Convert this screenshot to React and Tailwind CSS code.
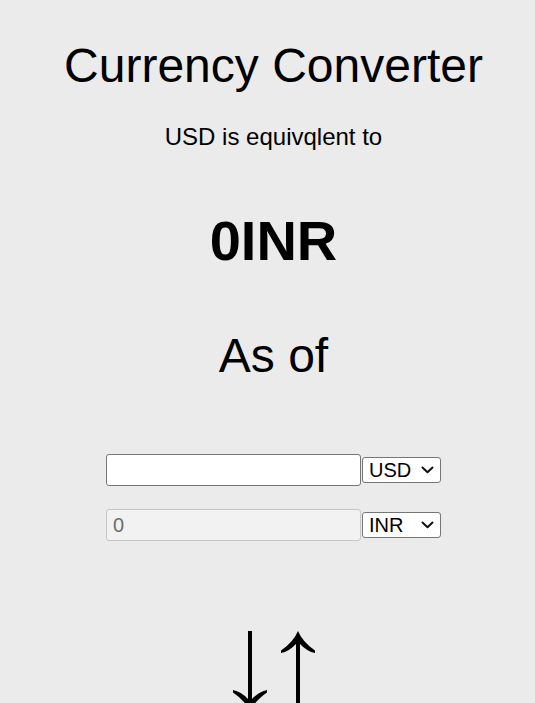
import React, { useState } from 'react';

const Chevron = () => (
  <svg
    className="pointer-events-none absolute right-[7px] top-1/2 -translate-y-1/2"
    width="13"
    height="8"
    viewBox="0 0 13 8"
    fill="none"
  >
    <path d="M1.5 1.5 L6.5 6.2 L11.5 1.5" stroke="#111" strokeWidth="2" strokeLinecap="round" strokeLinejoin="round" />
  </svg>
);

const CurrencySelect = ({ value, onChange, options }) => (
  <div className="relative">
    <select
      value={value}
      onChange={(e) => onChange(e.target.value)}
      className="block appearance-none w-[79px] h-[26px] pl-[6px] pr-5 text-[20px] leading-[22px] bg-white border border-[#767676] rounded-[3px]"
    >
      {options.map((o) => (
        <option key={o}>{o}</option>
      ))}
    </select>
    <Chevron />
  </div>
);

const SwapArrows = () => (
  <svg width="84" height="81" viewBox="0 0 84 81" className="block">
    {/* down arrow */}
    <path
      d="M18 81 Q22.5 70 35 61.5 L35 59 Q27 60.5 20 68 L20 0 L16 0 L16 68 Q9 60.5 1 59 L1 61.5 Q13.5 70 18 81 Z"
      fill="#000"
    />
    {/* up arrow */}
    <path
      d="M66 0 Q70.5 11 83 19.5 L83 22 Q75 20.5 68 13 L68 81 L64 81 L64 13 Q57 20.5 49 22 L49 19.5 Q61.5 11 66 0 Z"
      fill="#000"
    />
  </svg>
);

export default function App() {
  const [amount, setAmount] = useState('');
  const [from, setFrom] = useState('USD');
  const [to, setTo] = useState('INR');

  return (
    <div
      className="min-h-[703px] bg-[#ebebeb] pl-[12px] text-black text-center overflow-hidden"
      style={{ fontFamily: '"Liberation Sans", Arial, sans-serif' }}
    >
      <div className="flex flex-col items-center">
        <h1 className="mt-[38px] text-[48px] leading-[55px]">Currency Converter</h1>
        <p className="mt-[30px] text-[24px] leading-[28px]">{from} is equivqlent to</p>
        <h2 className="mt-[58px] text-[56px] leading-[64px] font-bold">0{to}</h2>
        <h3 className="mt-[55px] text-[48px] leading-[55px]">As of</h3>

        <div className="mt-[71px] flex items-center gap-px">
          <input
            type="text"
            value={amount}
            onChange={(e) => setAmount(e.target.value)}
            className="w-[255px] h-[32px] px-[6px] text-[20px] bg-white border border-[#767676] rounded-[3px] outline-none"
          />
          <CurrencySelect value={from} onChange={setFrom} options={['USD', 'INR', 'EUR']} />
        </div>

        <div className="mt-[23px] flex items-center gap-px">
          <input
            type="text"
            value="0"
            disabled
            readOnly
            className="w-[255px] h-[32px] px-[6px] text-[20px] text-[#6d6d6d] bg-[#f2f2f2] border border-[#c6c6c6] rounded-[3px]"
          />
          <CurrencySelect value={to} onChange={setTo} options={['INR', 'USD', 'EUR']} />
        </div>

        <div className="mt-[90px]">
          <SwapArrows />
        </div>
      </div>
    </div>
  );
}
